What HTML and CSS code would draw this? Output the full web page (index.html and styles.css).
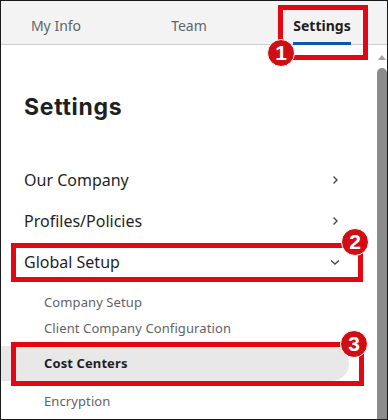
FILE: index.html
```html
<!DOCTYPE html>
<html>
<head>
  <title>Settings</title>
  <link rel="stylesheet" href="styles.css">
</head>
<body>
  <div class="frame">
    <div class="tabs">
      <div class="tab">My Info</div>
      <div class="tab">Team</div>
      <div class="tab active"><span>Settings</span></div>
    </div>

    <div class="main">
      <div class="content">
        <h2>Settings</h2>

        <div class="menu-item">
          <span>Our Company</span>
          <svg class="chev" width="10" height="10" viewBox="0 0 10 10"><polyline points="3.5,1.5 7,5 3.5,8.5"/></svg>
        </div>
        <div class="menu-item">
          <span>Profiles/Policies</span>
          <svg class="chev" width="10" height="10" viewBox="0 0 10 10"><polyline points="3.5,1.5 7,5 3.5,8.5"/></svg>
        </div>
        <div class="menu-item">
          <span>Global Setup</span>
          <svg class="chev" width="10" height="10" viewBox="0 0 10 10"><polyline points="1,3.5 5,7 9,3.5"/></svg>
        </div>

        <div class="sub-menu">
          <div class="sub-item">Company Setup</div>
          <div class="sub-item">Client Company Configuration</div>
          <div class="sub-item active">Cost Centers</div>
          <div class="sub-item">Encryption</div>
        </div>
      </div>

      <div class="scrollbar">
        <div class="arrow"></div>
        <div class="thumb"></div>
      </div>
    </div>

    <!-- callouts -->
    <div class="callout box-1"></div>
    <div class="badge badge-1">1</div>
    <div class="callout box-2"></div>
    <div class="badge badge-2">2</div>
    <div class="callout box-3"></div>
    <div class="badge badge-3">3</div>
  </div>
</body>
</html>
```

FILE: styles.css
```css
body {
  margin: 0;
  font-family: "Noto Sans", "Open Sans", sans-serif;
  background: white;
}
.frame {
  position: relative;
  width: 386px;
  height: 418px;
  border: 1px solid #1a1a1a;
  overflow: hidden;
}
.tabs {
  display: grid;
  grid-template-columns: 110px 156px 110px;
  height: 43px;
  background: #f3f3f3;
  border-bottom: 1px solid #cfcfcf;
}
.tab {
  display: flex;
  justify-content: center;
  align-items: flex-start;
  padding-top: 15px;
  font-size: 14px;
  line-height: 20px;
  color: #5b6670;
}
.tab.active {
  color: #1f1f1f;
  font-weight: 700;
}
.tab.active span {
  padding-bottom: 6px;
  border-bottom: 3px solid #0a5aa8;
}
.main {
  display: flex;
  height: 374px;
}
.content {
  flex: 1;
  padding-top: 47px;
}
h2 {
  margin: 0 0 37px 23px;
  font-family: Inter, "Noto Sans", sans-serif;
  font-size: 23px;
  font-weight: 700;
  line-height: 30px;
  color: #1f1f1f;
  letter-spacing: 0.7px;
}
.menu-item {
  display: flex;
  justify-content: space-between;
  align-items: center;
  height: 41px;
  padding: 0 34px 0 23px;
  font-size: 16px;
  color: #1f1f1f;
}
.chev {
  fill: none;
  stroke: #4a4a4a;
  stroke-width: 1.4;
}
.sub-menu {
  padding-top: 7px;
}
.sub-item {
  padding-left: 43px;
  font-size: 13px;
  line-height: 26px;
  color: #5f6368;
  letter-spacing: 0.1px;
}
.sub-item.active {
  margin: 5px 25px 7px 0;
  line-height: 35px;
  font-weight: 700;
  color: #1f1f1f;
  background: #e8e8e8;
  border-radius: 0 18px 18px 0;
}
.scrollbar {
  width: 13px;
  display: flex;
  flex-direction: column;
  align-items: center;
  padding-top: 10px;
}
.arrow {
  width: 0;
  height: 0;
  border-left: 4px solid transparent;
  border-right: 4px solid transparent;
  border-bottom: 5px solid #a3a3a3;
  margin-left: 2px;
}
.thumb {
  flex: 1;
  width: 10px;
  margin-top: 8px;
  margin-left: 2px;
  background: #8b8b8b;
  border-radius: 5px 5px 0 0;
}
.callout {
  position: absolute;
  border: 5px solid #e30613;
}
.box-1 {
  left: 277px;
  top: 4px;
  width: 80px;
  height: 45px;
}
.box-2 {
  left: 10px;
  top: 242px;
  width: 342px;
  height: 29px;
}
.box-3 {
  left: 10px;
  top: 341px;
  width: 343px;
  height: 34px;
}
.badge {
  position: absolute;
  width: 26px;
  height: 26px;
  border: 1px solid white;
  border-radius: 50%;
  background: #d10d14;
  color: white;
  font-family: "Liberation Sans", Arial, sans-serif;
  font-weight: 700;
  font-size: 21px;
  line-height: 26px;
  text-align: center;
}
.badge-1 {
  left: 266px;
  top: 38px;
}
.badge-2 {
  left: 340px;
  top: 227px;
}
.badge-3 {
  left: 339px;
  top: 329px;
}
```
